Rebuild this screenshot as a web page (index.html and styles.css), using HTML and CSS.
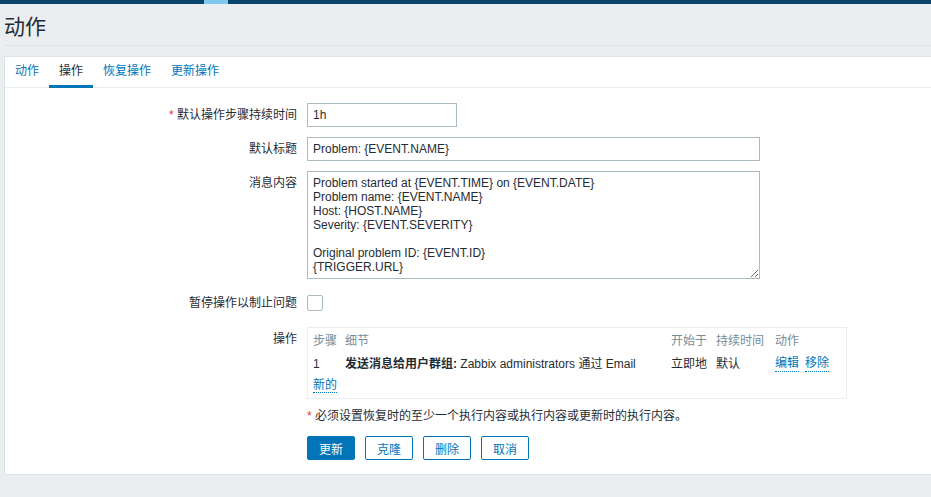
FILE: index.html
```html
<!DOCTYPE html>
<html lang="zh-CN">
<head>
<meta charset="utf-8">
<title>动作</title>
<link rel="stylesheet" href="styles.css">
</head>
<body>
<div class="topbar"><div class="tb-left"></div><div class="tb-mark"></div><div class="tb-right"></div></div>
<header class="page-header"><h1 class="title">动作</h1></header>
<main class="content">
  <ul class="tabs">
    <li class="tab">动作</li>
    <li class="tab active">操作</li>
    <li class="tab">恢复操作</li>
    <li class="tab">更新操作</li>
  </ul>
  <form class="form">
    <div class="row">
      <label class="label"><span class="req">*</span> 默认操作步骤持续时间</label>
      <div class="field"><input class="input short" type="text" value="1h"></div>
    </div>
    <div class="row">
      <label class="label">默认标题</label>
      <div class="field"><input class="input wide" type="text" value="Problem: {EVENT.NAME}"></div>
    </div>
    <div class="row">
      <label class="label">消息内容</label>
      <div class="field"><textarea class="textarea">Problem started at {EVENT.TIME} on {EVENT.DATE}
Problem name: {EVENT.NAME}
Host: {HOST.NAME}
Severity: {EVENT.SEVERITY}

Original problem ID: {EVENT.ID}
{TRIGGER.URL}</textarea></div>
    </div>
    <div class="row row-check">
      <label class="label">暂停操作以制止问题</label>
      <div class="field"><span class="checkbox"></span></div>
    </div>
    <div class="row row-ops">
      <label class="label">操作</label>
      <div class="field">
        <div class="ops-box">
          <table class="ops">
            <colgroup><col class="c1"><col class="c2"><col class="c3"><col class="c4"><col class="c5"></colgroup>
            <thead><tr><th>步骤</th><th>细节</th><th>开始于</th><th>持续时间</th><th>动作</th></tr></thead>
            <tbody>
              <tr class="op-row"><td>1</td><td><b>发送消息给用户群组:</b> Zabbix administrators 通过 Email</td><td>立即地</td><td>默认</td><td><span class="acts"><a class="link">编辑</a><a class="link">移除</a></span></td></tr>
              <tr class="new-row"><td colspan="5"><a class="link">新的</a></td></tr>
            </tbody>
          </table>
        </div>
      </div>
    </div>
    <div class="row row-note">
      <div class="label"></div>
      <div class="field note"><span class="req">*</span> 必须设置恢复时的至少一个执行内容或执行内容或更新时的执行内容。</div>
    </div>
    <div class="row row-buttons">
      <div class="label"></div>
      <div class="field buttons">
        <button type="button" class="btn primary">更新</button>
        <button type="button" class="btn alt">克隆</button>
        <button type="button" class="btn alt">删除</button>
        <button type="button" class="btn alt">取消</button>
      </div>
    </div>
  </form>
</main>
</body>
</html>
```

FILE: styles.css
```css
* { box-sizing: border-box; }
html, body { margin: 0; padding: 0; }
body {
  background: #ebeef0;
  color: #1f2c33;
  font-family: "Liberation Sans", Arial, "Noto Sans CJK SC", sans-serif;
  font-size: 12px;
  overflow: hidden;
  height: 497px;
}
.topbar { display: flex; height: 4px; }
.tb-left { width: 204px; background: #0a466a; }
.tb-mark { width: 24px; background: #80c7f2; }
.tb-right { flex: 1; background: #0a466a; }

.page-header {
  margin-left: 4px;
  height: 42px;
  border-bottom: 1px solid #dde2e5;
  padding-top: 11px;
}
.title {
  margin: 0;
  font-size: 21px;
  line-height: 24px;
  font-weight: normal;
  color: #1f2c33;
}

.content {
  margin: 10px 0 0 4px;
  background: #fff;
  border: 1px solid #dde2e5;
  border-right: none;
  height: 419px;
}
.tabs {
  list-style: none;
  margin: 0;
  padding: 0;
  display: flex;
  height: 31px;
  border-bottom: 1px solid #ebeef0;
}
.tab {
  padding: 0 10px;
  line-height: 28px;
  height: 31px;
  color: #0275b8;
}
.tab.active {
  color: #1f2c33;
  border-bottom: 3px solid #0275b8;
}

.form {
  padding-top: 15px;
  display: flex;
  flex-direction: column;
}
.row {
  display: grid;
  grid-template-columns: 292px 1fr;
  column-gap: 10px;
  margin-bottom: 10px;
}
.label {
  text-align: right;
  line-height: 24px;
  color: #1f2c33;
}
.req { color: #e33734; }
.input, .textarea {
  display: block;
  font-family: inherit;
  font-size: 12px;
  color: #1f2c33;
  border: 1px solid #acbbc2;
  background: #fff;
  margin: 0;
  border-radius: 0;
  outline: none;
}
.input { height: 24px; padding: 0 5px; }
.short { width: 150px; }
.wide { width: 453px; }
.textarea {
  width: 453px;
  height: 108px;
  padding: 4px 5px;
  line-height: 14px;
  resize: both;
  overflow: hidden;
}
.row-check { margin-top: 2px; margin-bottom: 12px; }
.row-check .field { display: flex; align-items: center; }
.checkbox {
  display: block;
  width: 16px;
  height: 16px;
  border: 1px solid #acbbc2;
  border-radius: 2px;
  background: #fff;
}
.ops-box {
  width: 540px;
  border: 1px solid #ebeef0;
  padding: 5px;
}
.ops {
  width: 528px;
  table-layout: fixed;
  border-collapse: collapse;
}
.c1 { width: 32px; }
.c2 { width: 326px; }
.c3 { width: 45px; }
.c4 { width: 59px; }
.c5 { width: 66px; }
.ops th {
  text-align: left;
  font-weight: normal;
  color: #768d99;
  line-height: 16px;
  padding: 0;
  white-space: nowrap;
}
.ops td {
  padding: 6px 0 0;
  line-height: 16px;
  white-space: nowrap;
}
.ops .new-row td { padding-top: 5px; }
.ops b { font-weight: bold; }
.acts { display: inline-flex; gap: 6px; }
.link {
  color: #0275b8;
  border-bottom: 1px dotted #0275b8;
  cursor: pointer;
}
.row-ops { margin-bottom: 8px; }
.row-note { margin-bottom: 11px; }
.note { line-height: 18px; }
.row-note .label { line-height: 18px; }
.buttons { display: flex; gap: 10px; }
.btn {
  font-family: inherit;
  font-size: 12px;
  height: 24px;
  width: 48px;
  padding: 0;
  border-radius: 2px;
  border: 1px solid #0275b8;
  cursor: pointer;
}
.btn.primary { background: #0275b8; color: #fff; }
.btn.alt { background: #fff; color: #0275b8; }
```
